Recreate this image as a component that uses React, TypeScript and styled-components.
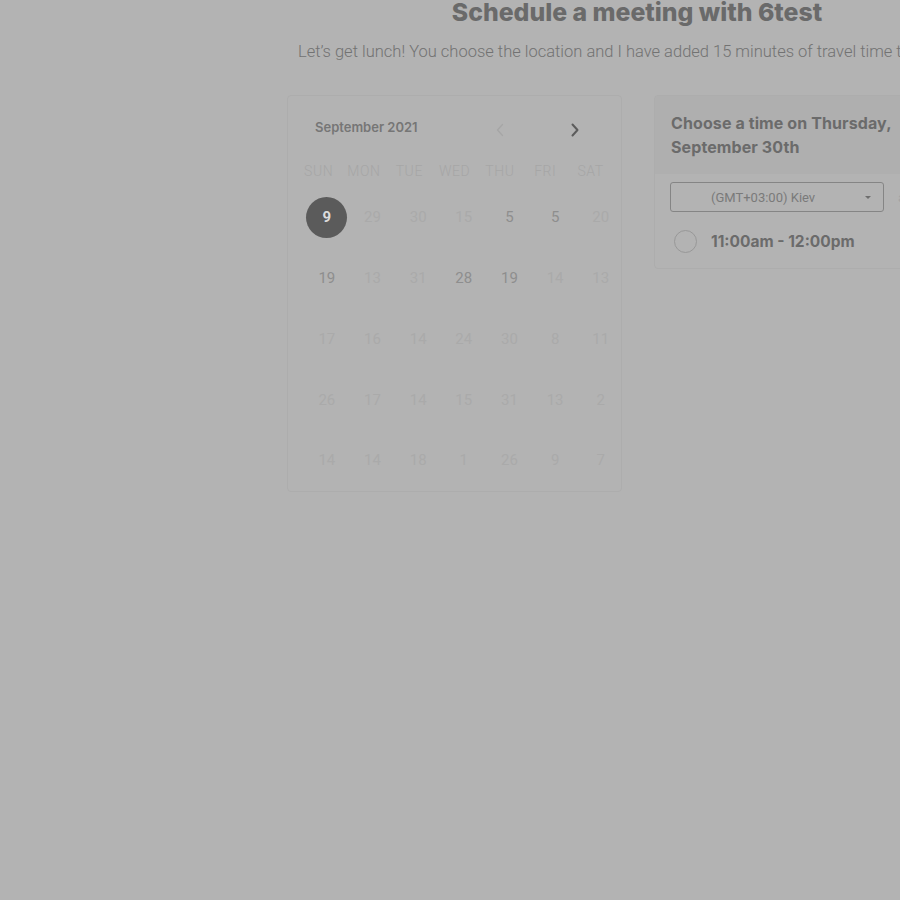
import React from 'react'
import styled, { createGlobalStyle } from 'styled-components'

const GlobalStyle = createGlobalStyle`
    html, body {
        margin: 0;
        padding: 0;
        background: #b3b3b3;
        overflow: hidden;
    }
    * {
        box-sizing: border-box;
    }
`

const S = {
    Page: styled.div`
        display: flex;
        width: 900px;
        height: 900px;
        padding-left: 287px;
        overflow: hidden;
    `,
    Main: styled.div`
        display: flex;
        flex-direction: column;
        flex: 0 0 700px;
        width: 700px;
    `,
    Title: styled.h1`
        margin: 0;
        font-family: Inter, 'Liberation Sans', sans-serif;
        font-size: 24.8px;
        line-height: 24px;
        font-weight: 800;
        color: #6a6a6a;
        text-align: center;
    `,
    Subtitle: styled.p`
        margin: 19px 0 0;
        padding-left: 11px;
        font-family: Roboto, 'Liberation Sans', sans-serif;
        font-size: 16.5px;
        line-height: 18px;
        font-weight: 300;
        color: #727272;
        white-space: nowrap;
    `,
    Columns: styled.div`
        display: flex;
        align-items: flex-start;
        gap: 32px;
        margin-top: 34px;
    `,
    CalendarCard: styled.div`
        flex: 0 0 335px;
        width: 335px;
        min-width: 0;
        height: 397px;
        padding: 0 8px;
        border: 1px solid #adadad;
        border-radius: 4px;
    `,
    MonthBar: styled.div`
        display: flex;
        align-items: center;
        height: 60px;
        padding: 0 0 0 19px;
    `,
    MonthLabel: styled.div`
        flex: 0 0 173px;
        margin-top: 1px;
        font-family: Inter, 'Liberation Sans', sans-serif;
        font-size: 13px;
        font-weight: 600;
        color: #767676;
    `,
    NavButton: styled.button<{ $dim?: boolean }>`
        display: flex;
        align-items: center;
        justify-content: center;
        width: 24px;
        height: 24px;
        margin-top: 7px;
        padding: 0;
        border: 0;
        background: transparent;
        color: ${(p) => (p.$dim ? '#a6a6a6' : '#5c5c5c')};
        & + & {
            margin-left: 51px;
        }
    `,
    WeekRow: styled.div`
        display: grid;
        grid-template-columns: repeat(7, 45.33px);
        height: 30px;
        align-items: center;
    `,
    WeekDay: styled.div`
        font-family: Roboto, 'Liberation Sans', sans-serif;
        font-size: 14px;
        font-weight: 300;
        color: #a6a6a6;
        text-align: center;
        letter-spacing: 0.6px;
    `,
    DateGrid: styled.div`
        display: grid;
        grid-template-columns: repeat(7, 45.67px);
        grid-auto-rows: 60.75px;
        padding-left: 8px;
        margin-top: 1px;
    `,
    DateCell: styled.div`
        display: flex;
        align-items: center;
        justify-content: center;
    `,
    DateNum: styled.span<{ $tone: 'faint' | 'mid' | 'selected' }>`
        display: flex;
        align-items: center;
        justify-content: center;
        width: 41px;
        height: 41px;
        border-radius: 50%;
        font-family: Roboto, 'Liberation Sans', sans-serif;
        font-size: 15px;
        font-weight: ${(p) => (p.$tone === 'selected' ? 700 : 400)};
        background: ${(p) => (p.$tone === 'selected' ? '#5b5b5b' : 'transparent')};
        color: ${(p) => (p.$tone === 'selected' ? '#dcdcdc' : p.$tone === 'mid' ? '#8e8e8e' : '#aaaaaa')};
    `,
    TimePanel: styled.div`
        flex: 0 0 333px;
        min-width: 0;
        border: 1px solid #adadad;
        border-radius: 4px;
        overflow: hidden;
    `,
    TimeHeader: styled.div`
        height: 78px;
        padding: 15px 16px 0;
        background: #afafaf;
        font-family: Inter, 'Liberation Sans', sans-serif;
        font-size: 16px;
        line-height: 24px;
        font-weight: 700;
        letter-spacing: 0.1px;
        color: #6b6b6b;
    `,
    TimeBody: styled.div`
        display: flex;
        flex-direction: column;
        padding: 8px 15px 12px;
    `,
    ZoneRow: styled.div`
        display: flex;
        align-items: center;
        gap: 14px;
    `,
    ZoneSelect: styled.div`
        display: flex;
        flex: 0 0 214px;
        align-items: center;
        height: 30px;
        padding: 0 12px 0 40px;
        border: 1px solid #858585;
        border-radius: 3px;
        font-family: Roboto, 'Liberation Sans', sans-serif;
        font-size: 13px;
        color: #7a7a7a;
    `,
    ZoneText: styled.span`
        flex: 1;
    `,
    Caret: styled.span`
        width: 0;
        height: 0;
        border-left: 3px solid transparent;
        border-right: 3px solid transparent;
        border-top: 3px solid #6e6e6e;
    `,
    ZoneHint: styled.span`
        font-family: Roboto, 'Liberation Sans', sans-serif;
        font-size: 13px;
        color: #a3a3a3;
        white-space: nowrap;
    `,
    SlotRow: styled.label`
        display: flex;
        align-items: center;
        gap: 14px;
        height: 30px;
        margin-top: 14px;
        padding-left: 4px;
        font-family: Inter, 'Liberation Sans', sans-serif;
        font-size: 15.5px;
        font-weight: 700;
        color: #6b6b6b;
    `,
    Radio: styled.span`
        flex: 0 0 23px;
        height: 23px;
        border: 1px solid #989898;
        border-radius: 50%;
    `,
}

const weekDays = ['SUN', 'MON', 'TUE', 'WED', 'THU', 'FRI', 'SAT']

type Tone = 'faint' | 'mid' | 'selected'

const rows: [string, Tone][][] = [
    [['9', 'selected'], ['29', 'faint'], ['30', 'faint'], ['15', 'faint'], ['5', 'mid'], ['5', 'mid'], ['20', 'faint']],
    [['19', 'mid'], ['13', 'faint'], ['31', 'faint'], ['28', 'mid'], ['19', 'mid'], ['14', 'faint'], ['13', 'faint']],
    [['17', 'faint'], ['16', 'faint'], ['14', 'faint'], ['24', 'faint'], ['30', 'faint'], ['8', 'faint'], ['11', 'faint']],
    [['26', 'faint'], ['17', 'faint'], ['14', 'faint'], ['15', 'faint'], ['31', 'faint'], ['13', 'faint'], ['2', 'faint']],
    [['14', 'faint'], ['14', 'faint'], ['18', 'faint'], ['1', 'faint'], ['26', 'faint'], ['9', 'faint'], ['7', 'faint']],
]

function Chevron({ dir }: { dir: 'left' | 'right' }) {
    return (
        <svg width="10" height="14" viewBox="0 0 10 14" fill="none">
            <path
                d={dir === 'left' ? 'M7.5 1.5 L2.5 7 L7.5 12.5' : 'M2.5 1.5 L7.5 7 L2.5 12.5'}
                stroke="currentColor"
                strokeWidth={dir === 'left' ? 1.3 : 2}
                strokeLinecap="round"
                strokeLinejoin="round"
            />
        </svg>
    )
}

export default function App() {
    return (
        <>
            <GlobalStyle />
            <S.Page>
                <S.Main>
                    <S.Title>Schedule a meeting with 6test</S.Title>
                    <S.Subtitle>
                        Let’s get lunch! You choose the location and I have added 15 minutes of travel time to each end
                    </S.Subtitle>
                    <S.Columns>
                        <S.CalendarCard>
                            <S.MonthBar>
                                <S.MonthLabel>September 2021</S.MonthLabel>
                                <S.NavButton $dim>
                                    <Chevron dir="left" />
                                </S.NavButton>
                                <S.NavButton>
                                    <Chevron dir="right" />
                                </S.NavButton>
                            </S.MonthBar>
                            <S.WeekRow>
                                {weekDays.map((d) => (
                                    <S.WeekDay key={d}>{d}</S.WeekDay>
                                ))}
                            </S.WeekRow>
                            <S.DateGrid>
                                {rows.flatMap((row, r) =>
                                    row.map(([n, tone], c) => (
                                        <S.DateCell key={`${r}-${c}`}>
                                            <S.DateNum $tone={tone}>{n}</S.DateNum>
                                        </S.DateCell>
                                    ))
                                )}
                            </S.DateGrid>
                        </S.CalendarCard>
                        <S.TimePanel>
                            <S.TimeHeader>
                                Choose a time on Thursday,
                                <br />
                                September 30th
                            </S.TimeHeader>
                            <S.TimeBody>
                                <S.ZoneRow>
                                    <S.ZoneSelect>
                                        <S.ZoneText>(GMT+03:00) Kiev</S.ZoneText>
                                        <S.Caret />
                                    </S.ZoneSelect>
                                    <S.ZoneHint>auto</S.ZoneHint>
                                </S.ZoneRow>
                                <S.SlotRow>
                                    <S.Radio />
                                    11:00am - 12:00pm
                                </S.SlotRow>
                            </S.TimeBody>
                        </S.TimePanel>
                    </S.Columns>
                </S.Main>
            </S.Page>
        </>
    )
}
